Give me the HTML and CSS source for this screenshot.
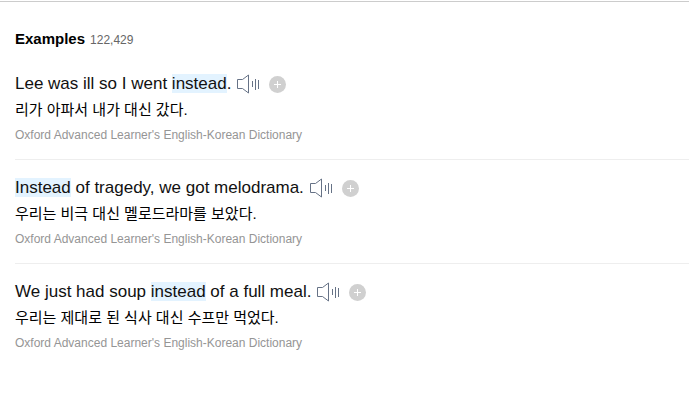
FILE: index.html
```html
<!DOCTYPE html>
<html lang="en">
<head>
<meta charset="utf-8">
<meta name="viewport" content="width=device-width, initial-scale=1">
<title>Examples</title>
<link rel="stylesheet" href="styles.css">
</head>
<body>
<svg class="sprite" aria-hidden="true">
  <symbol id="speaker" viewBox="0 0 24 20">
    <path d="M1.500 5.500h5l6-4.500v18l-6-4.500h-5z M16.500 7v6 M19.500 5v11 M22.500 6v9" fill="none" stroke="currentColor"/>
  </symbol>
  <symbol id="plus" viewBox="0 0 17 17">
    <circle cx="8.500" cy="8.500" r="8.500" fill="#d0d0d0"/>
    <path d="M8.500 5v7M5 8.500h7" stroke="#fff"/>
  </symbol>
</svg>
<main class="examples">
  <header class="heading">
    <h2 class="title">Examples</h2>
    <span class="count">122,429</span>
  </header>
  <ul class="list">
    <li class="item">
      <div class="sentence">
        <p class="english">Lee was ill so I went <mark>instead</mark>.</p>
        <button class="icon-button" type="button" aria-label="Listen"><svg class="speaker"><use href="#speaker"/></svg></button>
        <button class="icon-button add" type="button" aria-label="Add"><svg class="plus"><use href="#plus"/></svg></button>
      </div>
      <p class="korean" lang="ko">리가 아파서 내가 대신 갔다.</p>
      <p class="source">Oxford Advanced Learner's English-Korean Dictionary</p>
    </li>
    <li class="item">
      <div class="sentence">
        <p class="english"><mark>Instead</mark> of tragedy, we got melodrama.</p>
        <button class="icon-button" type="button" aria-label="Listen"><svg class="speaker"><use href="#speaker"/></svg></button>
        <button class="icon-button add" type="button" aria-label="Add"><svg class="plus"><use href="#plus"/></svg></button>
      </div>
      <p class="korean" lang="ko">우리는 비극 대신 멜로드라마를 보았다.</p>
      <p class="source">Oxford Advanced Learner's English-Korean Dictionary</p>
    </li>
    <li class="item">
      <div class="sentence">
        <p class="english">We just had soup <mark>instead</mark> of a full meal.</p>
        <button class="icon-button" type="button" aria-label="Listen"><svg class="speaker"><use href="#speaker"/></svg></button>
        <button class="icon-button add" type="button" aria-label="Add"><svg class="plus"><use href="#plus"/></svg></button>
      </div>
      <p class="korean" lang="ko">우리는 제대로 된 식사 대신 수프만 먹었다.</p>
      <p class="source">Oxford Advanced Learner's English-Korean Dictionary</p>
    </li>
  </ul>
</main>
</body>
</html>
```

FILE: styles.css
```css
* { box-sizing: border-box; }
body {
  margin: 0;
  padding-top: 1px;
  background: #fff;
  color: #000;
  font-family: "Liberation Sans", "Noto Sans CJK KR", sans-serif;
}
p, h2, ul { margin: 0; padding: 0; }
.sprite { display: none; }
.examples {
  border-top: 1px solid #ccc;
  padding: 27px 0 0 15px;
}
.heading {
  display: flex;
  align-items: baseline;
  gap: 5px;
  line-height: 20px;
}
.title { font-size: 15px; }
.count { font-size: 12px; color: #666; }
.list { list-style: none; }
.item { padding: 18px 0 16px; }
.item + .item { border-top: 1px solid #eee; }
.item:first-child { padding-top: 24px; }
.sentence { display: flex; align-items: center; gap: 5px; height: 20px; }
.english { font-size: 17px; line-height: 20px; color: #111; }
mark { background: #e3f3ff; color: inherit; }
.icon-button {
  display: flex;
  padding: 0;
  border: 0;
  background: none;
  color: #667286;
  cursor: pointer;
}
.add { margin-left: 4px; }
.speaker { width: 24px; height: 20px; }
.plus { width: 17px; height: 17px; }
.korean { margin-top: 4px; font-size: 15px; line-height: 24px; }
.source { margin-top: 5px; font-size: 12px; line-height: 16px; color: #959595; }
```
